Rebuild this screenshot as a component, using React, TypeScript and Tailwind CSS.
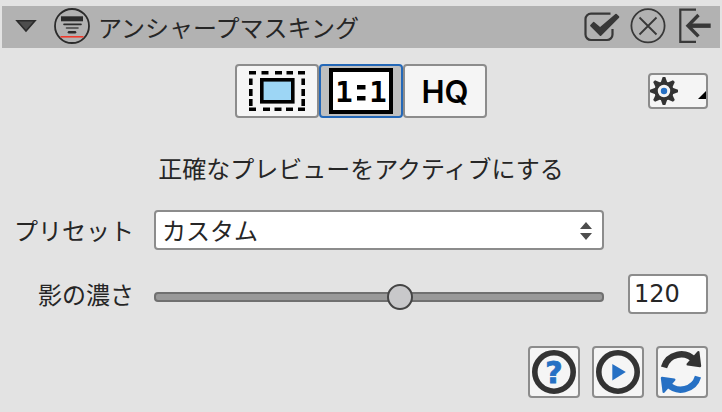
import React, { useState } from 'react';

const toolButton = 'h-[54px] w-[84px] flex items-center justify-center border-2 rounded';
const actionButton = 'size-[52px] flex items-center justify-center bg-[#f5f5f5] border-2 border-[#8c8c8c] rounded';

function FilterIcon() {
  return (
    <svg width="36" height="42" viewBox="0 0 36 42" fill="none" stroke="#2b2b2b" aria-hidden="true">
      <circle cx="18" cy="20" r="17" strokeWidth="1.8" />
      <path d="M7 12.8h22" strokeWidth="5" />
      <path d="M10 18.4h17" strokeWidth="1.6" strokeLinecap="round" />
      <path d="M12.5 22h11.5" strokeWidth="1.6" strokeLinecap="round" stroke="#444" />
      <path d="M15 26.2h6" strokeWidth="2.6" strokeLinecap="round" />
      <path d="M6.5 30.8h23" strokeWidth="1.6" stroke="#f03a2c" />
    </svg>
  );
}

function ApplyIcon() {
  return (
    <svg className="overflow-visible" width="36" height="42" viewBox="0 0 36 42" fill="none" aria-hidden="true">
      <path d="M28.5 7.6H9a5.5 5.5 0 0 0-5.5 5.5v15.4A5.5 5.5 0 0 0 9 34h16a5.5 5.5 0 0 0 5.5-5.5V23" stroke="#383838" strokeWidth="2.2" />
      <path d="M9 19.5l2.6-2.7 6.5 5.3L34 8.6l2.4 2.4-17.9 18z" fill="#383838" stroke="#383838" strokeWidth="1.8" strokeLinejoin="round" />
    </svg>
  );
}

function CancelIcon() {
  return (
    <svg width="36" height="42" viewBox="0 0 36 42" fill="none" stroke="#383838" strokeWidth="1.8" aria-hidden="true">
      <circle cx="18" cy="19.8" r="16.6" />
      <path d="M9.5 11.5l17 17M26.5 11.5l-17 17" />
    </svg>
  );
}

function ExitIcon() {
  return (
    <svg width="36" height="42" viewBox="0 0 36 42" fill="none" stroke="#383838" aria-hidden="true">
      <path d="M18 3.7H2.3v32.1H18" strokeWidth="2.2" />
      <path d="M11 19.7h21.7" strokeWidth="4.4" />
      <path d="M20.5 9L10 19.7 20.5 30.4" strokeWidth="3.4" />
    </svg>
  );
}

function SelectionIcon() {
  return (
    <svg width="56" height="40" viewBox="0 0 56 40" fill="none" stroke="#000" strokeWidth="3.6" aria-hidden="true">
      <path d="M0 1.8h7M12.5 1.8h7M26 1.8h7M37.5 1.8h6.5M49 1.8h7" />
      <path d="M0 38.2h7M14 38.2h7M25.5 38.2h7M37 38.2h7M49 38.2h7" />
      <path d="M1.8 7.5v6.5M1.8 18v7M1.8 28v7M54.2 7.5v6.5M54.2 18v7M54.2 28v7" />
      <rect x="12.8" y="8.8" width="31" height="22" fill="#9dd6f5" />
    </svg>
  );
}

function ActualSizeIcon() {
  return (
    <svg width="64" height="46" viewBox="0 0 64 46" aria-hidden="true">
      <rect x="2" y="2" width="60" height="42" fill="#fff" stroke="#000" strokeWidth="4" />
      <g textAnchor="middle" className="font-['DejaVu_Sans_Mono'] text-[29px] font-bold">
        <text x="15" y="34">1</text>
        <text x="49" y="34">1</text>
      </g>
      <path d="M28 17h8.5v4.4H28zM28 28h8.5v4.4H28z" />
    </svg>
  );
}

function GearIcon() {
  return (
    <svg width="56" height="32" viewBox="0 0 56 32" aria-hidden="true">
      <g fill="#333">
        {[0, 45, 90, 135, 180, 225, 270, 315].map((angle) => (
          <path key={angle} d="M10.5 8L12.7 2h2.6l2.2 6z" transform={`rotate(${angle} 14 16)`} />
        ))}
      </g>
      <circle cx="14" cy="16" r="7.9" fill="#f5f5f5" stroke="#333" strokeWidth="3.4" />
      <circle cx="14" cy="16" r="3.2" fill="#2670c4" />
      <path d="M48 24l8-8v8z" fill="#000" />
    </svg>
  );
}

function HelpIcon() {
  return (
    <svg width="48" height="48" viewBox="0 0 48 48" aria-hidden="true">
      <circle cx="24" cy="24" r="19.2" fill="none" stroke="#333" strokeWidth="5.6" />
      <text x="24" y="35" textAnchor="middle" strokeWidth="0.8" className="font-['DejaVu_Sans'] text-[30px] font-bold fill-[#2670c4] stroke-[#2670c4]">?</text>
    </svg>
  );
}

function PlayIcon() {
  return (
    <svg width="48" height="48" viewBox="0 0 48 48" aria-hidden="true">
      <circle cx="24" cy="24" r="19.2" fill="none" stroke="#333" strokeWidth="5.6" />
      <path d="M18.3 16v16.4L31.8 24z" fill="#2670c4" />
    </svg>
  );
}

function ResetIcon() {
  const arrow = (
    <>
      <path d="M6 19.3A17.8 17.8 0 0 1 36.5 12.5" fill="none" stroke="currentColor" strokeWidth="6.4" />
      <path d="M40.3 4.2L42 18l-12.3-1.6z" fill="currentColor" stroke="currentColor" strokeWidth="2.4" strokeLinejoin="round" />
    </>
  );
  return (
    <svg width="48" height="48" viewBox="0 0 48 48" aria-hidden="true">
      <g className="text-[#333333]">{arrow}</g>
      <g className="text-[#2670c4]" transform="rotate(180 23 24)">{arrow}</g>
    </svg>
  );
}

export default function App() {
  const [preset, setPreset] = useState('custom');
  const [amount, setAmount] = useState(120);

  return (
    <div className="min-h-screen bg-[#e3e3e3] pt-[6px] pb-[14px] font-['Noto_Sans_CJK_JP',sans-serif] text-2xl text-[#262626]">
      {/* Title bar */}
      <header className="mx-[2px] h-[42px] flex items-center bg-[#b2b2b2] pl-3 pr-[6px]">
        <button type="button" aria-label="折りたたむ" className="mr-4">
          <svg width="24" height="42" viewBox="0 0 24 42" aria-hidden="true">
            <path d="M3 14.7h18L12 25z" fill="#4d4d4d" stroke="#2b2b2b" strokeWidth="1.6" />
          </svg>
        </button>
        <FilterIcon />
        <h1 className="ml-2 flex-1 leading-[42px]">アンシャープマスキング</h1>
        <div className="flex gap-3">
          <button type="button" aria-label="適用"><ApplyIcon /></button>
          <button type="button" aria-label="キャンセル"><CancelIcon /></button>
          <button type="button" aria-label="終了"><ExitIcon /></button>
        </div>
      </header>

      <main className="px-[14px] pt-4">
        {/* Preview modes */}
        <div className="grid grid-cols-[1fr_auto_1fr] items-center">
          <div className="col-start-2 flex">
            <button type="button" aria-label="選択範囲" className={`${toolButton} bg-[#f5f5f5] border-[#8c8c8c]`}>
              <SelectionIcon />
            </button>
            <button type="button" aria-label="1:1" aria-pressed="true" className={`${toolButton} bg-[#bfbfbf] border-[#2468b8]`}>
              <ActualSizeIcon />
            </button>
            <button type="button" className={`${toolButton} bg-[#f5f5f5] border-[#8c8c8c] font-['Inter',sans-serif] text-[31px] font-semibold leading-none text-black`}>
              HQ
            </button>
          </div>
          <button type="button" aria-label="設定" className="h-9 w-[60px] justify-self-end bg-[#f5f5f5] border-2 border-[#8c8c8c] rounded">
            <GearIcon />
          </button>
        </div>

        <p className="mt-8 text-center leading-9">正確なプレビューをアクティブにする</p>

        <div className="mt-6 grid grid-cols-[auto_1fr_80px] items-center gap-y-6">
          <label htmlFor="preset" className="text-right leading-10">プリセット</label>
          <div className="relative ml-5 mr-6">
            <select
              id="preset"
              value={preset}
              onChange={(e) => setPreset(e.target.value)}
              className="block h-10 w-full appearance-none bg-white border-2 border-[#8c8c8c] rounded pl-[6px] pr-8 leading-9"
            >
              <option value="custom">カスタム</option>
            </select>
            <svg className="absolute right-3 top-3 pointer-events-none" width="12" height="18" viewBox="0 0 12 18" fill="#4d4d4d" aria-hidden="true">
              <path d="M0 7l6-7 6 7zM0 11l6 7 6-7z" />
            </svg>
          </div>

          <label htmlFor="amount" className="col-start-1 text-right leading-10">影の濃さ</label>
          <input
            id="amount"
            type="range"
            min={10}
            max={210}
            value={amount}
            onChange={(e) => setAmount(Number(e.target.value))}
            className="ml-5 mr-6 mb-1 h-[26px] min-w-0 self-end appearance-none bg-transparent [&::-webkit-slider-runnable-track]:h-[10px] [&::-webkit-slider-runnable-track]:rounded [&::-webkit-slider-runnable-track]:border-2 [&::-webkit-slider-runnable-track]:border-[#707070] [&::-webkit-slider-runnable-track]:bg-[#999999] [&::-webkit-slider-thumb]:appearance-none [&::-webkit-slider-thumb]:size-[26px] [&::-webkit-slider-thumb]:-mt-[10px] [&::-webkit-slider-thumb]:rounded-full [&::-webkit-slider-thumb]:border-2 [&::-webkit-slider-thumb]:border-[#444444] [&::-webkit-slider-thumb]:bg-[#c8c8ca]"
          />
          <input
            type="text"
            aria-label="影の濃さの値"
            value={amount}
            onChange={(e) => setAmount(Number(e.target.value) || 0)}
            className="h-10 w-full bg-white border-2 border-[#8c8c8c] rounded px-1 font-['DejaVu_Sans',sans-serif]"
          />
        </div>

        <div className="mt-8 flex justify-end gap-3">
          <button type="button" aria-label="ヘルプ" className={actionButton}><HelpIcon /></button>
          <button type="button" aria-label="実行" className={actionButton}><PlayIcon /></button>
          <button type="button" aria-label="リセット" className={actionButton}><ResetIcon /></button>
        </div>
      </main>
    </div>
  );
}
